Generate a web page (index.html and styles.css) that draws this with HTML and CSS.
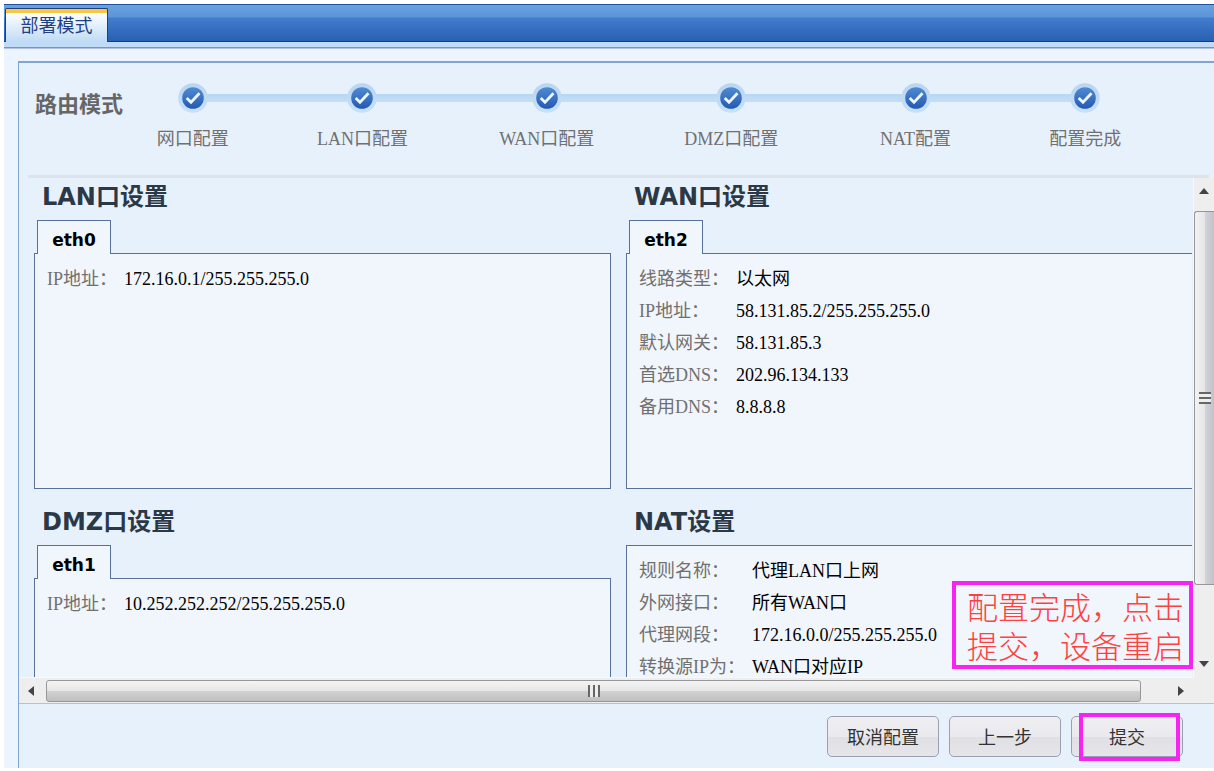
FILE: index.html
```html
<!DOCTYPE html>
<html lang="zh-CN">
<head>
<meta charset="utf-8">
<title>部署模式</title>
<link rel="stylesheet" href="styles.css">
</head>
<body>
<svg class="defs" aria-hidden="true">
  <defs>
    <linearGradient id="disc" x1="0" y1="0" x2="0" y2="1"><stop offset="0" stop-color="#4f8bd3"/><stop offset="1" stop-color="#2459b3"/></linearGradient>
    <linearGradient id="ring" x1="0" y1="0" x2="0" y2="1"><stop offset="0" stop-color="#b9d5ef"/><stop offset="1" stop-color="#c6e1f9"/></linearGradient>
    <symbol id="done" viewBox="0 0 30 30">
      <circle cx="15" cy="15" r="14.8" fill="url(#ring)"/>
      <circle cx="15" cy="15" r="10.8" fill="url(#disc)"/>
      <path d="M8.7 15 L13 19.3 L21.5 10.2" fill="none" stroke="#eef5fd" stroke-width="2.8"/>
    </symbol>
  </defs>
</svg>
<header class="tabbar"><a class="tabbar-tab" href="#">部署模式</a></header>
<main class="page">
  <section class="wizard">
    <div class="wizard-head">
      <h1 class="wizard-title">路由模式</h1>
      <ol class="steps">
        <li class="step"><span class="step-track"><svg class="step-icon"><use href="#done"/></svg></span>网口配置</li>
        <li class="step"><span class="step-track"><svg class="step-icon"><use href="#done"/></svg></span>LAN口配置</li>
        <li class="step"><span class="step-track"><svg class="step-icon"><use href="#done"/></svg></span>WAN口配置</li>
        <li class="step"><span class="step-track"><svg class="step-icon"><use href="#done"/></svg></span>DMZ口配置</li>
        <li class="step"><span class="step-track"><svg class="step-icon"><use href="#done"/></svg></span>NAT配置</li>
        <li class="step"><span class="step-track"><svg class="step-icon"><use href="#done"/></svg></span>配置完成</li>
      </ol>
    </div>
    <div class="scroller">
      <div class="viewport">
        <div class="groups">
          <section class="group">
            <h2 class="group-title">LAN口设置</h2>
            <div class="port-tabs"><button class="port-tab" type="button">eth0</button></div>
            <dl class="box">
              <div class="row"><dt>IP地址：</dt><dd>172.16.0.1/255.255.255.0</dd></div>
            </dl>
          </section>
          <section class="group group-wan">
            <h2 class="group-title">WAN口设置</h2>
            <div class="port-tabs"><button class="port-tab" type="button">eth2</button></div>
            <dl class="box">
              <div class="row"><dt>线路类型：</dt><dd>以太网</dd></div>
              <div class="row"><dt>IP地址：</dt><dd>58.131.85.2/255.255.255.0</dd></div>
              <div class="row"><dt>默认网关：</dt><dd>58.131.85.3</dd></div>
              <div class="row"><dt>首选DNS：</dt><dd>202.96.134.133</dd></div>
              <div class="row"><dt>备用DNS：</dt><dd>8.8.8.8</dd></div>
            </dl>
          </section>
          <section class="group">
            <h2 class="group-title">DMZ口设置</h2>
            <div class="port-tabs"><button class="port-tab" type="button">eth1</button></div>
            <dl class="box">
              <div class="row"><dt>IP地址：</dt><dd>10.252.252.252/255.255.255.0</dd></div>
            </dl>
          </section>
          <section class="group group-nat">
            <h2 class="group-title">NAT设置</h2>
            <dl class="box">
              <div class="row"><dt>规则名称：</dt><dd>代理LAN口上网</dd></div>
              <div class="row"><dt>外网接口：</dt><dd>所有WAN口</dd></div>
              <div class="row"><dt>代理网段：</dt><dd>172.16.0.0/255.255.255.0</dd></div>
              <div class="row"><dt>转换源IP为：</dt><dd>WAN口对应IP</dd></div>
            </dl>
          </section>
        </div>
        <p class="callout">配置完成，点击<br>提交，设备重启</p>
      </div>
      <div class="bar bar-v" aria-hidden="true">
        <svg class="arrow" viewBox="0 0 12 12"><path d="M1 9 L6 3 L11 9Z"/></svg>
        <div class="thumb"><span class="grip"></span></div>
        <svg class="arrow" viewBox="0 0 12 12"><path d="M1 3 L6 9 L11 3Z"/></svg>
      </div>
      <div class="bar bar-h" aria-hidden="true">
        <svg class="arrow" viewBox="0 0 12 12"><path d="M9 1 L3 6 L9 11Z"/></svg>
        <div class="thumb"><span class="grip"></span></div>
        <svg class="arrow" viewBox="0 0 12 12"><path d="M3 1 L9 6 L3 11Z"/></svg>
      </div>
      <div class="corner"></div>
    </div>
    <footer class="actions">
      <button class="btn" type="button">取消配置</button>
      <button class="btn" type="button">上一步</button>
      <span class="marked"><button class="btn" type="submit">提交</button></span>
    </footer>
  </section>
</main>
</body>
</html>
```
FILE: styles.css
```css
* { box-sizing: border-box; }

body {
  margin: 0;
  height: 100vh;
  padding: 4px 0 3px 4px;
  display: flex;
  flex-direction: column;
  background: #fff;
  color: #000;
  font: 18px/32px "Liberation Serif", "Noto Sans CJK SC", serif;
  overflow: hidden;
}

h1, h2, ol, dl, dd, p { margin: 0; padding: 0; }

.defs { position: absolute; width: 0; height: 0; }

/* Window tab bar */
.tabbar {
  height: 38px;
  flex: none;
  display: flex;
  align-items: flex-end;
  padding-left: 1px;
  border-top: 1px solid #23509c;
  border-bottom: 1px solid #173c7c;
  background: linear-gradient(#6aa1e0, #5b95d8 12px, #427dcd 13px, #2860b2);
}

.tabbar-tab {
  height: 34px;
  margin-bottom: -1px;
  width: 103px;
  border: 1px solid #1f3f7d;
  border-bottom: 0;
  border-radius: 2px 2px 0 0;
  background: linear-gradient(#fec63f 0 4px, #fff 4px, #bfdbf5);
  color: #1f3f85;
  line-height: 34px;
  text-align: center;
  text-decoration: none;
}

.page {
  flex: 1;
  min-height: 0;
  display: flex;
  padding: 14px 0 0 14px;
  border-top: 5px solid #bfdbf5;
  background: linear-gradient(#7d92c2 0 1px, #ecf4ff 2px);
}

.wizard {
  flex: 1;
  min-width: 0;
  display: flex;
  flex-direction: column;
  border: solid #7fa5d0;
  border-width: 2px 0 0 1px;
  background: #e7f1fc;
}

/* Progress header */
.wizard-head {
  flex: none;
  display: flex;
  margin: 0 5px 0 9px;
  padding: 20px 46px 24px 7px;
  border-bottom: 3px solid #dae4ea;
}

.wizard-title {
  flex: 0 0 80px;
  min-width: 0;
  padding-top: 6px;
  color: #666;
  font-size: 22px;
  font-weight: 700;
  white-space: nowrap;
}

.steps {
  flex: 1;
  display: grid;
  grid-template-columns: 155fr 184fr 184fr 184fr 184fr 155fr;
  list-style: none;
}

.step { color: #707070; text-align: center; line-height: 24px; }

.step-track { display: flex; align-items: center; margin-bottom: 14px; }

.step-track::before,
.step-track::after { content: ""; flex: 1; height: 8px; background: linear-gradient(#b9d6f1, #c3dff8); }

.step:first-child .step-track::before,
.step:last-child .step-track::after { visibility: hidden; }

.step-icon { width: 30px; height: 30px; margin: 0 -1px; flex: none; }

/* Scrolling area */
.scroller {
  flex: 1;
  min-height: 0;
  display: grid;
  grid-template: minmax(0, 1fr) 26px / minmax(0, 1fr) 21px;
  border-bottom: 1px solid #b4c2d3;
}

.viewport { position: relative; overflow: hidden; }

.groups {
  display: grid;
  grid-template-columns: 577fr 566fr;
  column-gap: 15px;
  padding: 3px 1px 0 15px;
}

.group-title {
  padding-left: 8px;
  color: #2b3947;
  font: 700 24px/32px "DejaVu Sans", "Noto Sans CJK SC", sans-serif;
}

.port-tabs { display: flex; padding: 7px 0 0 3px; }

.port-tab {
  position: relative;
  z-index: 1;
  width: 74px;
  height: 34px;
  margin-bottom: -1px;
  padding: 5px 0 0;
  border: 1px solid #56719a;
  border-bottom: 0;
  background: #f0f6fb;
  font: 700 17px/24px "DejaVu Sans", sans-serif;
}

.box {
  height: 236px;
  margin-bottom: 17px;
  padding: 9px 12px;
  border: 1px solid #56719a;
  background: #f0f6fb;
}

.group-wan .box,
.group-nat .box { border-right: 0; }
.group-nat .box { margin-top: 7px; }

.row { display: flex; }
.row dt { flex: 0 0 77px; color: #707070; white-space: nowrap; }
.group-wan dt { flex-basis: 97px; }
.group-nat dt { flex-basis: 113px; }

.callout {
  position: absolute;
  right: 0;
  bottom: 8px;
  padding: 1px 5px 1px 11px;
  border: 4px solid #f723f3;
  background: #f0f6fb;
  color: #ff4040;
  font: 300 31px/39px "Noto Sans CJK SC", sans-serif;
}

/* Drawn scroll bars */
.bar { display: flex; align-items: center; background: #eee; }
.bar-v { flex-direction: column; padding: 7px 0; border-left: 1px solid #f8f8f8; }
.bar-h { padding: 0 6px; border-top: 1px solid #f8f8f8; }
.corner { background: #eee; }

.arrow { width: 12px; height: 12px; flex: none; fill: #444; }

.thumb { display: flex; align-items: center; justify-content: center; border: 1px solid #97979b; border-radius: 3px; }

.bar-v .thumb {
  flex: 1;
  width: 20px;
  margin: 14px 0 73px;
  border-right: 0;
  border-radius: 3px 0 0 3px;
  background: linear-gradient(90deg, #f3f3f4, #e6e6e8 50%, #d3d3d8 50%, #c2c2ca);
}

.bar-h .thumb {
  flex: 1;
  height: 22px;
  margin: 0 34px 0 9px;
  background: linear-gradient(#f4f4f4, #e6e6e6 50%, #d2d2d2 50%, #bfbfbf);
}

.grip { width: 12px; height: 12px; }
.bar-v .grip { background: repeating-linear-gradient(#666 0 2px, #eee 2px 5px); }
.bar-h .grip { background: repeating-linear-gradient(90deg, #666 0 2px, #eee 2px 5px); }

/* Actions */
.actions { flex: none; display: flex; justify-content: flex-end; gap: 10px; padding: 12px 31px 11px 0; }

.btn {
  width: 112px;
  height: 41px;
  padding: 0 0 2px;
  border: 1px solid #9c9eb2;
  border-radius: 5px;
  background: linear-gradient(#efeff2, #eaeaee 50%, #e0e0e4 50%, #e6e6ea);
  color: #333;
  font: 18px/24px "Noto Sans CJK SC", sans-serif;
}

.marked { position: relative; display: flex; }
.marked::after {
  content: "";
  position: absolute;
  inset: -3px 3px -4px 8px;
  border: 4px solid #f723f3;
  pointer-events: none;
}
```
